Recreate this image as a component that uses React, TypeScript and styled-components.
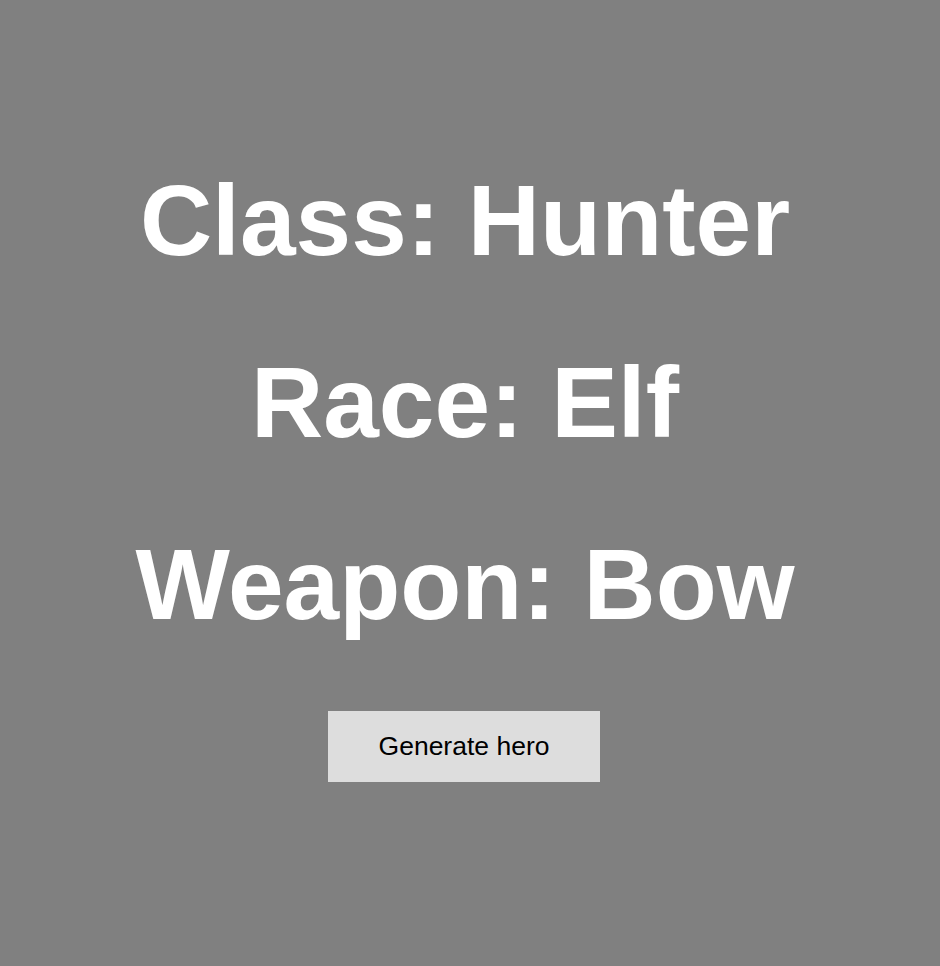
import React from "react";
import styled, { createGlobalStyle } from "styled-components";

const GlobalStyle = createGlobalStyle`
  html, body {
    margin: 0;
    padding: 0;
    background: #808080;
  }
  body {
    font-family: "Liberation Sans", Arial, sans-serif;
  }
`;

const Page = styled.main`
  min-height: 966px;
  box-sizing: border-box;
  padding: 96px 10px 0 0;
  display: flow-root;
  text-align: center;
`;

const Stat = styled.h1`
  margin: 67px 0;
  font-size: 100px;
  font-weight: bold;
  color: #ffffff;
  line-height: normal;
`;

const GenerateButton = styled.button`
  margin: 2px 2px 0 0;
  font-family: "Liberation Sans", Arial, sans-serif;
  font-size: 26.5px;
  line-height: normal;
  color: #000000;
  background: #dddddd;
  border: none;
  padding: 20px 51px;
  cursor: pointer;
`;

const hero = [
  { label: "Class", value: "Hunter" },
  { label: "Race", value: "Elf" },
  { label: "Weapon", value: "Bow" },
];

export default function App() {
  return (
    <>
      <GlobalStyle />
      <Page>
        {hero.map((h) => (
          <Stat key={h.label}>
            {h.label}: {h.value}
          </Stat>
        ))}
        <GenerateButton>Generate hero</GenerateButton>
      </Page>
    </>
  );
}
